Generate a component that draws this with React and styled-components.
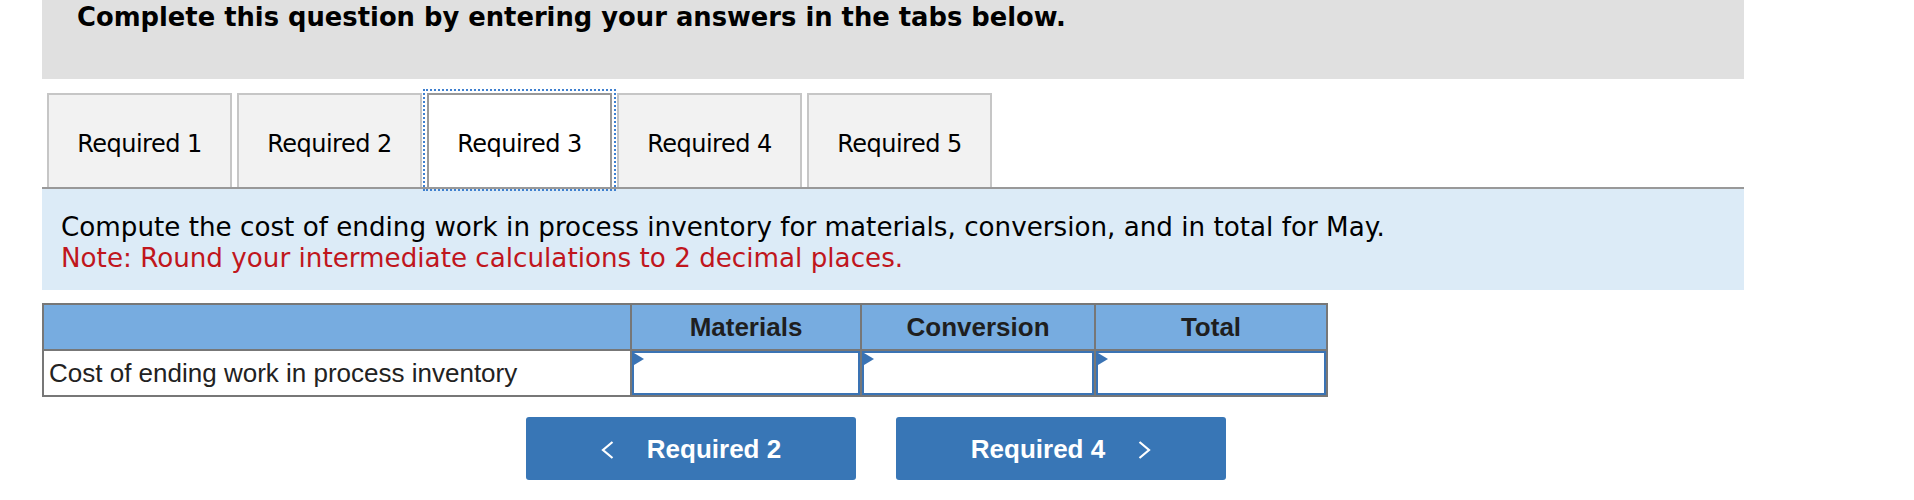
import React, { useState } from 'react'
import styled, { createGlobalStyle } from 'styled-components';

const GlobalStyle = createGlobalStyle`
    body {
        margin: 0;
        background: #fff;
    }
`;

const Page = styled.div`
    width: 1702px;
    padding-left: 42px;
`;

const Banner = styled.div`
    box-sizing: border-box;
    height: 79px;
    padding: 2px 0 0 35px;
    background: #e0e0e0;
    color: #000;
    font-family: "DejaVu Sans", Verdana, sans-serif;
    font-weight: bold;
    font-size: 25.8px;
`;

const TabList = styled.div`
    display: flex;
    gap: 5px;
    margin-top: 14px;
    padding-left: 5px;
    border-bottom: 2px solid #999;
`;

const Tab = styled.div`
    box-sizing: border-box;
    display: flex;
    align-items: center;
    justify-content: center;
    width: 185px;
    height: 94px;
    padding-top: 6px;
    border: 2px solid ${p => (p.$active ? '#999' : '#c6c6c6')};
    border-bottom: none;
    background: ${p => (p.$active ? '#fff' : '#f2f2f2')};
    color: #000;
    font-family: "DejaVu Sans", Verdana, sans-serif;
    font-size: 24px;
    letter-spacing: -0.5px;
    cursor: pointer;
    position: relative;
    z-index: ${p => (p.$active ? 1 : 0)};
    outline: ${p => (p.$active ? '2px dotted #3f80cf' : 'none')};
    outline-offset: 2px;
`;

const Prompt = styled.div`
    padding: 23px 19px 16px;
    background: #dcebf7;
    color: #000;
    font-family: "DejaVu Sans", Verdana, sans-serif;
    font-size: 26.2px;
    line-height: 31px;
`;

const Note = styled.div`
    color: #c0161d;
`;

const Grid = styled.div`
    display: grid;
    grid-template-columns: 586px 228px 232px 230px;
    grid-auto-rows: 44px;
    gap: 2px;
    width: fit-content;
    margin-top: 13px;
    padding: 2px;
    background: #777;
    font-family: "Liberation Sans", Arial, sans-serif;
    font-size: 26px;
`;

const HeadCell = styled.div`
    display: flex;
    align-items: center;
    justify-content: center;
    padding-top: 1px;
    background: #77ace0;
    color: #1f1f1f;
    font-weight: bold;
`;

const LabelCell = styled.div`
    display: flex;
    align-items: center;
    padding: 1px 0 0 5px;
    background: #fff;
    color: #222;
`;

const InputCell = styled.div`
    position: relative;
    background: #fff;
`;

const AmountInput = styled.input`
    box-sizing: border-box;
    width: 100%;
    height: 100%;
    margin: 0;
    padding: 0 8px;
    border: 2px solid #3a73b4;
    background: #fff;
    font: inherit;
    text-align: right;
    outline: none;
`;

const Marker = styled.span`
    position: absolute;
    top: 2px;
    left: 2px;
    width: 0;
    height: 0;
    border-top: 6px solid transparent;
    border-bottom: 6px solid transparent;
    border-left: 10px solid #3a73b4;
    pointer-events: none;
`;

const Nav = styled.div`
    display: flex;
    gap: 40px;
    margin-top: 20px;
    padding-left: 484px;
`;

const NavButton = styled.button`
    display: flex;
    align-items: center;
    justify-content: center;
    gap: 33px;
    width: 330px;
    height: 63px;
    padding: 2px 0 0;
    border: none;
    border-radius: 3px;
    background: #3876b6;
    color: #fff;
    font-family: "Liberation Sans", Arial, sans-serif;
    font-weight: bold;
    font-size: 26px;
    cursor: pointer;
`;

const Chevron = ({ dir }) => (
    <svg width="13" height="18" viewBox="0 0 13 18">
        <polyline
            points={dir === 'left' ? '11.5,1 2,9 11.5,17' : '1.5,1 11,9 1.5,17'}
            fill="none"
            stroke="#fff"
            strokeWidth="2.2"
        />
    </svg>
);

const tabs = ['Required 1', 'Required 2', 'Required 3', 'Required 4', 'Required 5'];
const columns = ['Materials', 'Conversion', 'Total'];

function App() {
    const [activeTab, setActiveTab] = useState(2);
    const [values, setValues] = useState({ Materials: '', Conversion: '', Total: '' });

    const changeHandler = (col, e) => {
        setValues({ ...values, [col]: e.target.value });
    }

    return (
        <Page>
            <GlobalStyle />
            <Banner>Complete this question by entering your answers in the tabs below.</Banner>

            <TabList>
                {tabs.map((t, i) =>
                    <Tab key={t} $active={activeTab === i} onClick={() => setActiveTab(i)}>
                        {t}
                    </Tab>
                )}
            </TabList>

            <Prompt>
                Compute the cost of ending work in process inventory for materials, conversion, and in total for May.
                <Note>Note: Round your intermediate calculations to 2 decimal places.</Note>
            </Prompt>

            <Grid>
                <HeadCell />
                {columns.map(c => <HeadCell key={c}>{c}</HeadCell>)}
                <LabelCell>Cost of ending work in process inventory</LabelCell>
                {columns.map(c =>
                    <InputCell key={c}>
                        <AmountInput value={values[c]} onChange={(e) => changeHandler(c, e)} />
                        <Marker />
                    </InputCell>
                )}
            </Grid>

            <Nav>
                <NavButton onClick={() => setActiveTab(1)}>
                    <Chevron dir="left" />
                    <span>Required 2</span>
                </NavButton>
                <NavButton onClick={() => setActiveTab(3)}>
                    <span>Required 4</span>
                    <Chevron dir="right" />
                </NavButton>
            </Nav>
        </Page>
    )
}

export default App
